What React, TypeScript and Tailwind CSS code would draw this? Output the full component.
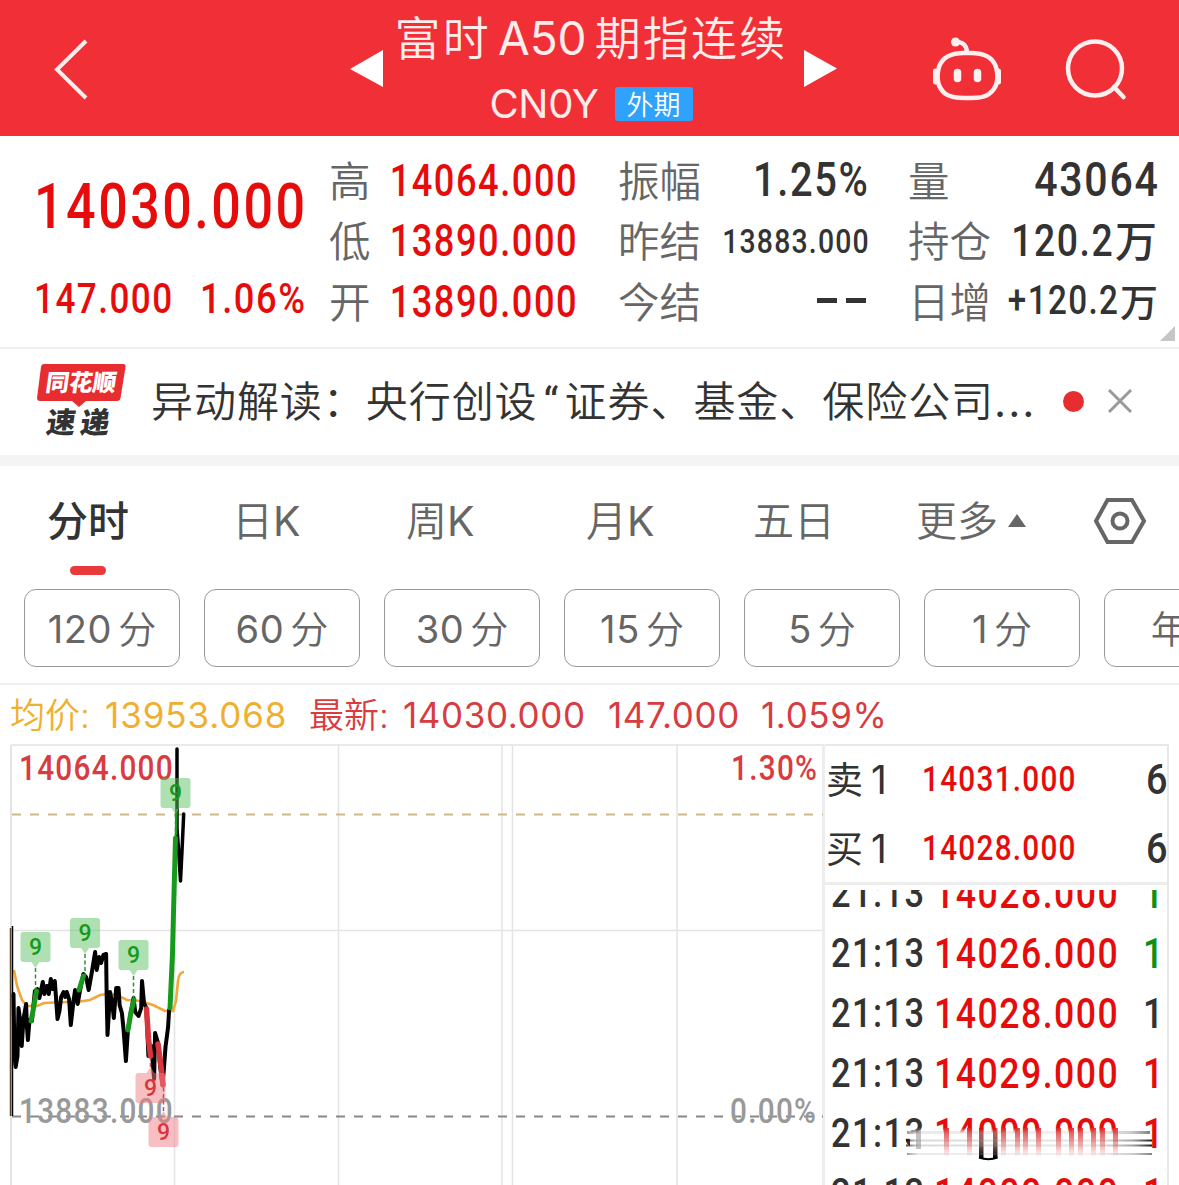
import { clsx } from "clsx";

const din = "font-['Roboto','Noto_Sans_CJK_SC',sans-serif] font-medium tracking-[0.042em]";

const columns = [
  {
    box: "ml-[329px] w-[249px]",
    rows: [
      { label: "高", value: "14064.000", cls: "text-[45px] scale-x-[0.805] text-[#e60c0c]" },
      { label: "低", value: "13890.000", cls: "text-[45px] scale-x-[0.805] text-[#e60c0c]" },
      { label: "开", value: "13890.000", cls: "text-[45px] scale-x-[0.805] text-[#e60c0c]" },
    ],
  },
  {
    box: "ml-[40px] w-[252px]",
    rows: [
      { label: "振幅", value: "1.25%", cls: "text-[48px] scale-x-[0.83] text-[#333]" },
      { label: "昨结", value: "13883.000", cls: "text-[34px] scale-x-[0.835] text-[#333]" },
      { label: "今结", value: "--", cls: "" },
    ],
  },
  {
    box: "ml-[38px] w-[251px]",
    rows: [
      { label: "量", value: "43064", cls: "text-[48px] scale-x-[0.855] text-[#333]" },
      { label: "持仓", value: "120.2", unit: "万", unitCls: "ml-[1px] mr-[2px] text-[42px]", cls: "text-[45px] scale-x-[0.83] text-[#333]" },
      { label: "日增", value: "+120.2", unit: "万", unitCls: "ml-[1px] mr-[1px] text-[38px]", cls: "text-[40px] scale-x-[0.83] text-[#333]" },
    ],
  },
];

const tabs = [
  { name: "分时", cls: "ml-[47px] w-[84px]" },
  { name: "日", latin: "K", cls: "ml-[101px] w-[84px]" },
  { name: "周", latin: "K", cls: "ml-[90px] w-[84px]" },
  { name: "月", latin: "K", cls: "ml-[96px] w-[84px]" },
  { name: "五日", cls: "ml-[83px] w-[84px]" },
  { name: "更多", cls: "ml-[79px] w-[84px]" },
];

const periods = [
  { num: "120", unit: "分" },
  { num: "60", unit: "分" },
  { num: "30", unit: "分" },
  { num: "15", unit: "分" },
  { num: "5", unit: "分" },
  { num: "1", unit: "分" },
  { num: "", unit: "年K" },
];

const orders = [
  { side: "卖", price: "14031.000", amount: 6 },
  { side: "买", price: "14028.000", amount: 6 },
];

const ticks = [
  { price: "14028.000", color: "text-[#0f9015]" },
  { price: "14026.000", color: "text-[#0f9015]" },
  { price: "14028.000", color: "text-[#333]" },
  { price: "14029.000", color: "text-[#e60c0c]" },
  { price: "14000.000", color: "text-[#e60c0c]" },
  { price: "14000.000", color: "text-[#e60c0c]" },
];

const scaleLabels = [
  { x: 19, y: 779.5, text: "14064.000", fill: "#d93c40" },
  { x: 731, y: 779.5, text: "1.30%", fill: "#d93c40" },
  { x: 19, y: 1123, text: "13883.000", fill: "#999" },
  { x: 730, y: 1123, text: "0.00%", fill: "#999" },
];

const markers = [
  { x: 35.5, y: 932, stem: 990, up: false },
  { x: 85, y: 918, stem: 976, up: false },
  { x: 133.5, y: 940, stem: 1000, up: false },
  { x: 175.5, y: 778, stem: 840, up: false },
  { x: 150.5, y: 1073, stem: 1058, up: true },
  { x: 163.5, y: 1117, stem: 1086, up: true },
];

const Header = () => (
  <header className="flex h-[136px] items-start bg-[#f12f37]">
    <svg className="mt-[36px] ml-[50px]" width="40" height="68" fill="none" stroke="#ffeceb" strokeWidth="4">
      <path d="M36 5 7 33.5 36 62" />
    </svg>
    <svg className="mt-[49px] ml-[260px]" width="34" height="40" fill="#fff">
      <path d="M0 20 33 1v37z" />
    </svg>
    <div className="flex w-[420px] flex-col items-center pr-[6px]">
      <h1 className="mt-[10px] flex h-[56px] items-center font-['Inter','Noto_Sans_CJK_SC',sans-serif] text-[46px] leading-none font-[350] tracking-[2.2px] whitespace-nowrap text-[#ffeceb]">
        <span>富时</span>
        <span className="mr-[8px] ml-[7px] font-normal tracking-normal">A50</span>
        <span>期指连续</span>
      </h1>
      <div className="mt-[13px] flex h-[50px] items-center">
        <span className="font-['Inter'] text-[40px] leading-none font-normal tracking-[-0.3px] text-[#ffeceb]">CN0Y</span>
        <span className="ml-[16px] flex h-[34px] w-[78px] items-center justify-center rounded-[3px] bg-[#2fa3fb] pb-[2px] font-['Noto_Sans_CJK_SC'] text-[27px] leading-none font-[350] text-white">
          外期
        </span>
      </div>
    </div>
    <svg className="mt-[49px]" width="34" height="40" fill="#fff">
      <path d="M0 1 33 19.5 0 38z" />
    </svg>
    <svg className="mt-[34px] ml-[92px]" width="76" height="70" fill="none" stroke="#fff0ef" strokeWidth="4.5">
      <path d="M41 19c14 0 22 5 25 14 3 11 1 21-7 27-5 4-12 4-18 4H35c-8 0-15-.5-20-4.500-7-6-9-15.500-6-26.500 3-9 12-14 25-14z" />
      <path d="M37 19c0-7-4-11-10-11" />
      <circle cx="25.500" cy="8" r="4.500" fill="#fff0ef" stroke="none" />
      <path d="M5.500 37v11M68.500 37v11" strokeWidth="5" strokeLinecap="round" />
      <path d="M27.500 38.500v6M47.500 38.500v6" strokeWidth="7.500" strokeLinecap="round" />
    </svg>
    <svg className="mt-[37px] ml-[58px]" width="68" height="68" fill="none" stroke="#fff0ef" strokeWidth="4.500">
      <circle cx="31" cy="31.500" r="27" />
      <path d="m50 50 9.500 10" strokeLinecap="round" />
    </svg>
  </header>
);

const Quote = () => (
  <section className="relative flex h-[211px] items-start pt-[14px]">
    <div className={clsx(din, "absolute top-0 left-0 leading-none whitespace-nowrap text-[#e60c0c]")}>
      <div className="mt-[39px] ml-[34px] origin-left scale-x-[0.826] text-[63px] tracking-[0.048em]">14030.000</div>
      <div className="mt-[39px] ml-[34px] flex text-[43px]">
        <span className="w-[166px] origin-left scale-x-[0.815] tracking-[0.042em]">147.000</span>
        <span className="origin-left scale-x-[0.845] tracking-[0.042em]">1.06%</span>
      </div>
    </div>
    {columns.map((col, i) => (
      <div key={i} className={clsx("flex shrink-0 flex-col", col.box)}>
        {col.rows.map((row) => (
          <div key={row.label} className="flex h-[60.5px] items-center justify-between leading-none whitespace-nowrap">
            <span className="w-[84px] pb-[2px] font-['Noto_Sans_CJK_SC'] text-[41.5px] font-[350] text-[#666]">{row.label}</span>
            <div className="flex min-w-0 items-center justify-end">
              {row.value === "--" ? (
                <span className="mr-[4px] mb-[2px] flex gap-[9px]">
                  <i className="h-[5px] w-[20px] bg-[#333]" />
                  <i className="h-[5px] w-[20px] bg-[#333]" />
                </span>
              ) : (
                <span className={clsx(din, "origin-right", row.cls)}>{row.value}</span>
              )}
              {row.unit && (
                <span className={clsx("pb-[3px] font-['Noto_Sans_CJK_SC'] font-medium text-[#333]", row.unitCls)}>{row.unit}</span>
              )}
            </div>
          </div>
        ))}
      </div>
    ))}
    <svg className="absolute right-[4px] bottom-[6px]" width="15" height="15" fill="#c6c6c6">
      <path d="M15 0v15H0z" />
    </svg>
  </section>
);

const News = () => (
  <section className="flex h-[119px] items-center border-t-2 border-b-[11px] border-[#f4f4f4] border-t-[#efefef] whitespace-nowrap">
    <div className="relative ml-[36px] h-[76px] w-[90px]">
      <svg className="absolute inset-0" width="90" height="48" fill="#e72d30">
        <path d="M8 0h79q3 0 2.500 3l-5 31q-.5 3-3.500 3H50l-7 6-7-6H4q-3 0-3-3L5 3q.5-3 3-3z" />
      </svg>
      <span className="absolute top-[6px] left-[10px] -skew-x-8 font-['Noto_Sans_CJK_SC'] text-[23.500px] leading-none font-black text-white">
        同花顺
      </span>
      <span className="absolute top-[42px] left-[11px] -skew-x-8 font-['Noto_Sans_CJK_SC'] text-[29px] leading-none font-black tracking-[5px] text-[#333]">
        速递
      </span>
    </div>
    <p className="ml-[25px] w-[890px] pb-[2px] font-['Noto_Sans_CJK_SC'] text-[42px] leading-none font-[350] tracking-[0.95px] text-[#333]">
      异动解读：央行创设
      <span className="inline-block w-[27px] pl-[6px] font-['Roboto'] font-normal tracking-normal">“</span>
      证券、基金、保险公司
      <span className="font-['Inter'] font-normal tracking-[2px]">...</span>
    </p>
    <span className="mb-[2px] ml-[22px] h-[21px] w-[21px] rounded-full bg-[#e72d30]" />
    <svg className="mb-[2px] ml-[23px]" width="26" height="26" stroke="#999" strokeWidth="3">
      <path d="m2 2 22 22M24 2 2 24" />
    </svg>
  </section>
);

const Tabs = () => (
  <section className="h-[219px] border-b-2 border-[#efefef]">
    <nav className="flex h-[110px] items-center font-['Inter','Noto_Sans_CJK_SC',sans-serif] text-[41px] leading-none whitespace-nowrap">
      {tabs.map((tab, i) => (
        <div key={tab.name} className={clsx("relative", tab.cls, i === 0 ? "font-medium text-[#333]" : "font-[350] text-[#666]")}>
          {tab.name}
          {tab.latin && <span className="font-normal">{tab.latin}</span>}
          {i === 0 && <i className="absolute top-[65px] left-[23px] h-[9px] w-[36px] rounded-full bg-[#e9393a]" />}
        </div>
      ))}
      <svg className="ml-[7px]" width="20" height="14" fill="#666">
        <path d="M10 0 19 13H1z" />
      </svg>
      <svg className="ml-[66px] shrink-0" width="54" height="48" fill="none" stroke="#666" strokeWidth="4">
        <path d="M14.500 3h24.500l12 21-12 21H14.500L3 24z" />
        <circle cx="27" cy="24" r="7.500" />
      </svg>
    </nav>
    <div className="mt-[13px] flex gap-[24px] overflow-hidden pl-[24px]">
      {periods.map((p) => (
        <button
          key={p.num}
          className="flex h-[78px] w-[156px] shrink-0 items-center justify-center rounded-[12px] border-[1.5px] border-[#999] pt-[2px] font-['Inter','Noto_Sans_CJK_SC',sans-serif] text-[38px] leading-none font-[350] whitespace-nowrap text-[#666]"
        >
          {p.num && <span className="mr-[6px] font-normal tracking-[0.6px]">{p.num}</span>}
          {p.unit}
        </button>
      ))}
    </div>
  </section>
);

const Chart = () => (
  <svg className="shrink-0" width="825" height="442" viewBox="0 743 825 442" fill="none">
    <g stroke="#e4e4e4" strokeWidth="1.500">
      <path d="M11 745H824M11 930.500H824M174.500 930V1185M338.500 745V1185M502 745V1185M512.500 745V1185M677 745V1185" />
      <path d="M11 745V1185" strokeWidth="2" />
      <path d="M823.500 745V1185" stroke="#ededed" strokeWidth="3" />
    </g>
    <path d="M12 814.500H823" stroke="#cdb88a" strokeWidth="1.800" strokeDasharray="9 9" />
    <path d="M12 1116.500H823" stroke="#888" strokeWidth="1.800" strokeDasharray="9 9" />

    <g fontFamily="Roboto" fontWeight="500" fontSize="35" letterSpacing="1.500">
      {scaleLabels.map((l) => (
        <text key={l.text} transform={`translate(${l.x} ${l.y}) scale(0.85 1)`} fill={l.fill}>
          {l.text}
        </text>
      ))}
    </g>

    <path
      d="M14 970l3 16 5 14 5 6h10l7-3 23-1h10l13-2 10-5 7-1 10 1 10 5 13 1 13 4 12 6h8l3-10 2-20q1-9 6-9"
      stroke="#f3a73b"
      strokeWidth="2.600"
    />
    <path d="M10.500 928V1116" stroke="#5c4632" strokeWidth="1.500" />
    <path d="M12.500 926V1116" stroke="#000" strokeWidth="1.500" />
    <g strokeLinejoin="round" strokeLinecap="round" strokeWidth="4" stroke="#000">
      <path d="M13.500 994l1 63 1.200 10 1.800-11 1-48 1.600 12 1.600 26 1.800-27 2.600-15 .8 22 1 14 1.600-20 2.400 1 3-30 2.500-2 2 9 3.400-16 1.600 12 2.400-8 2 8 2-15 2 10 2-8 1.300 18 1.400 20 2-8 1.600-14 2.400-5 1.600 5 1.700-5 2.300 7 1.700 26 2.600-23 1.700-12 2.600 14 2.400-14 3.300-16 2.700 3 2.600 13 3-17 3.400-21 1.600 18 2.400-13 2 6 2.300-8 2.700-1 .6 44 .8 37 2.600-43 2.400 13 1.300 13 2.400-30h2.400l1 17 2.300 8 1.700 17 2.300 31 2-31 3-18 2.700-14 1.600 14 3.400 4 2.600-8 .8-27 2 22 2.400 5 2 48 3-10 2.700 33 1-46 3 10 2 23 2.400 19 1.300-15 1.700-23 2.600-20 1-17" />
      <path d="M177 749v80l1.500 20 2 32 1.500-30 1.700-37" strokeWidth="3.500" />
    </g>
    <g strokeLinejoin="round" strokeLinecap="round" strokeWidth="5" stroke="#169a1c">
      <path d="M31 1021l2-10 3.500-20M79 990l4.500-14M128 1030l3-18 3-12M170 1008l2.500-54 1-41 2-75" />
      <path d="M176 834l.5-24" strokeWidth="2.500" />
    </g>
    <g strokeLinejoin="round" strokeLinecap="round" strokeWidth="5.500" stroke="#d9353c">
      <path d="M146.500 1009l2 30 2 17M158 1044l3 22 2 19" />
    </g>

    {markers.map((m) => (
      <g key={m.x} transform={`translate(${m.x} ${m.y})`}>
        <path
          d={m.up ? "M-12 0h8l4-6 4 6h8q3 0 3 3v24q0 3-3 3h-24q-3 0-3-3V3q0-3 3-3z" : "M-12 0h24q3 0 3 3v24q0 3-3 3H4l-4 6-4-6h-8q-3 0-3-3V3q0-3 3-3z"}
          fill={m.up ? "#f27f85" : "#5fc264"}
          fillOpacity="0.5"
        />
        <path
          d={m.up ? `M0 -6V${m.stem - m.y}` : `M0 36V${m.stem - m.y}`}
          stroke={m.up ? "#c2555a" : "#2f8f33"}
          strokeWidth="1.500"
          strokeDasharray="4 2.500"
        />
        <text y="23" textAnchor="middle" fontFamily="Roboto" fontWeight="500" fontSize="23" fill={m.up ? "#d9353c" : "#169a1c"}>
          9
        </text>
      </g>
    ))}
  </svg>
);

// torn strip lying over the last full tick row
const Smear = () => (
  <svg className="absolute top-[237px] left-[79px]" width="254" height="36" fill="none">
    <defs>
      <linearGradient id="fade" x1="0" y1="0" x2="0" y2="1">
        <stop offset="0" stopColor="#fff" stopOpacity="0" />
        <stop offset="0.150" stopColor="#fff" />
        <stop offset="1" stopColor="#fff" />
      </linearGradient>
      <linearGradient id="drip" x1="0" y1="0" x2="0" y2="1">
        <stop offset="0" stopColor="#e02a2a" stopOpacity="0.900" />
        <stop offset="0.500" stopColor="#e02a2a" stopOpacity="0.450" />
        <stop offset="1" stopColor="#e02a2a" stopOpacity="0" />
      </linearGradient>
      <linearGradient id="ink" x1="0" y1="0" x2="0" y2="1">
        <stop offset="0" stopColor="#d00" stopOpacity="0.700" />
        <stop offset="0.500" stopColor="#300" stopOpacity="0.600" />
        <stop offset="1" stopColor="#000" />
      </linearGradient>
      <linearGradient id="streak" x1="0" y1="0" x2="1" y2="0">
        <stop offset="0" stopColor="#000" stopOpacity="0.800" />
        <stop offset="0.050" stopColor="#888" stopOpacity="0.350" />
        <stop offset="0.750" stopColor="#999" stopOpacity="0.250" />
        <stop offset="0.920" stopColor="#555" stopOpacity="0.600" />
        <stop offset="1" stopColor="#000" />
      </linearGradient>
    </defs>
    <path d="M6 1H238V36H6z" fill="url(#fade)" />
    <g fill="url(#drip)">
      {[40, 63, 97, 111, 119, 132, 152, 165, 174, 187, 196, 209].map((x) => (
        <rect key={x} x={x} y="1" width="5" height="29" />
      ))}
    </g>
    <rect x="12" y="2" width="5" height="20" fill="#333" fillOpacity="0.300" />
    <path d="M75 1h4.500v30h-4.500zM89 1h4.500v30h-4.500z" fill="url(#ink)" />
    <path d="M75 30.500q9.500 3.500 18.500 0" stroke="#000" strokeWidth="2" />
    <g fill="url(#streak)">
      <rect x="3" y="4" width="243" height="3" opacity="0.500" />
      <rect x="2" y="12.500" width="246" height="2" opacity="0.900" />
      <rect x="2" y="17.500" width="246" height="2" opacity="0.900" />
      <rect x="3" y="26" width="245" height="2" opacity="0.500" />
    </g>
  </svg>
);

const OrderBook = () => (
  <div className="mt-[1px] flex h-[441px] w-[344px] shrink-0 flex-col border-t-2 border-r-2 border-[#e8e8e8]">
    <div className="h-[139px] shrink-0 border-b-[3px] border-[#ededed]">
      {orders.map((o) => (
        <div key={o.side} className="flex h-[69px] items-center pb-[2px] leading-none whitespace-nowrap text-[#333]">
          <span className="w-[46px] shrink-0 pb-[2px] pl-[1px] font-['Noto_Sans_CJK_SC'] text-[37px] font-[380]">{o.side}</span>
          <span className="w-[51px] shrink-0 font-['Inter'] text-[39px]">1</span>
          <span className={clsx(din, "w-[224px] shrink-0 origin-left scale-x-[0.85] text-[35px] text-[#e60c0c]")}>{o.price}</span>
          <span className={clsx(din, "origin-left scale-x-[0.88] text-[43px]")}>{o.amount}</span>
        </div>
      ))}
    </div>
    <div className="relative mt-[5px] flex-1 overflow-hidden">
      <div className="-mt-[26px]">
        {ticks.map((t, i) => (
          <div key={i} className={clsx(din, "flex h-[60px] items-center leading-none whitespace-nowrap")}>
            <span className="ml-[6px] w-[103px] origin-left scale-x-[0.86] text-[40px] tracking-[0.042em] text-[#333]">21:13</span>
            <span className="w-[209px] origin-left scale-x-[0.848] text-[42px] tracking-[0.042em] text-[#e60c0c]">{t.price}</span>
            <span className={clsx("origin-left scale-x-[0.85] text-[42px]", t.color)}>1</span>
          </div>
        ))}
      </div>
      <Smear />
    </div>
  </div>
);

export default function App() {
  return (
    <main className="h-[1185px] w-[1179px] overflow-hidden bg-white">
      <Header />
      <Quote />
      <News />
      <Tabs />
      <div className="flex h-[58px] items-center pt-[3px] pl-[10px] font-['Inter','Noto_Sans_CJK_SC',sans-serif] text-[35px] leading-none font-normal whitespace-nowrap text-[#d93c40]">
        <span className="w-[95px] font-[350] text-[#efb02f]">均价:</span>
        <span className="w-[204px] tracking-[0.9px] text-[#efb02f]">13953.068</span>
        <span className="w-[94px] font-[350]">最新:</span>
        <span className="w-[205px] tracking-[0.6px]">14030.000</span>
        <span className="w-[153px] tracking-[0.6px]">147.000</span>
        <span className="tracking-[0.6px]">1.059%</span>
      </div>
      <div className="flex">
        <Chart />
        <OrderBook />
      </div>
    </main>
  );
}
